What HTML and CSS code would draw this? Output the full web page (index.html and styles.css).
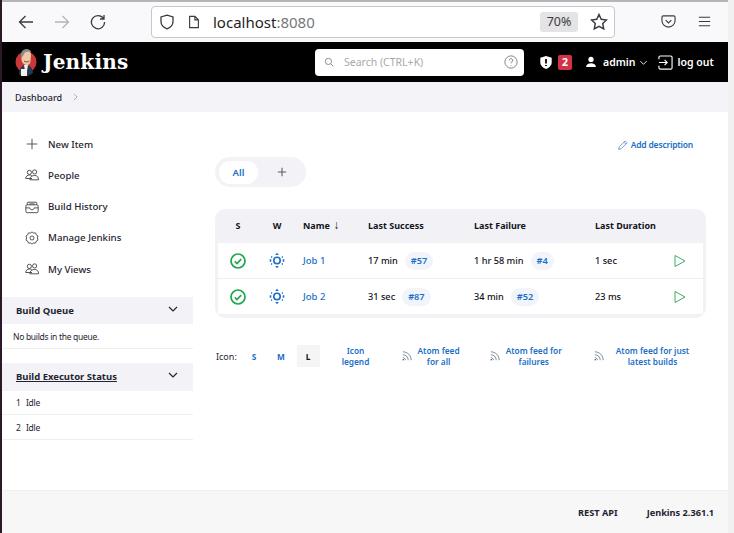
FILE: index.html
```html
<!DOCTYPE html>
<html lang="en">
<head>
    <meta charset="UTF-8">
    <meta name="viewport" content="width=device-width, initial-scale=1.0">
    <title>Dashboard [Jenkins]</title>
    <link rel="stylesheet" href="styles.css">
</head>
<body>
<div class="screen">
    <div class="edge"></div>
    <div class="window">
        <div class="toolbar">
            <svg class="nav-icon" viewBox="0 0 16 16"><path d="M15 8H1.500M7.500 2 1.500 8l6 6"/></svg>
            <svg class="nav-icon off" viewBox="0 0 16 16"><path d="M1 8h13.500M8.500 2l6 6-6 6"/></svg>
            <svg class="nav-icon" viewBox="0 0 16 16"><path d="M13.500 4.500A6.600 6.600 0 1 0 14.600 8M14 1v4h-4"/></svg>
            <div class="urlbar">
                <svg class="url-icon" viewBox="0 0 16 16"><path d="M8 1.200 14 3v4.500c0 3.600-2.600 6-6 7.300-3.400-1.300-6-3.700-6-7.300V3z"/></svg>
                <svg class="url-icon page" viewBox="0 0 16 16"><path d="M3 1.500h6l4 4V14.500H3zM9 1.500v4h4"/></svg>
                <span class="url-text">localhost<span class="url-port">:8080</span></span>
                <span class="zoom-level">70%</span>
                <svg class="url-icon star" viewBox="0 0 16 16"><path d="m8 1.300 2 4.300 4.700.6-3.400 3.200.9 4.700L8 11.800l-4.200 2.300.9-4.700L1.300 6.200 6 5.600z"/></svg>
            </div>
            <svg class="tool-icon pocket" viewBox="0 0 16 16"><path d="M2.500 2h11A1.500 1.500 0 0 1 15 3.500V7A7 7 0 0 1 1 7V3.500A1.500 1.500 0 0 1 2.500 2zM5 6.500l3 3 3-3"/></svg>
            <svg class="tool-icon menu" viewBox="0 0 16 16"><path d="M2 3.500h12M2 8h12M2 12.500h12"/></svg>
        </div>

        <header class="page-header">
            <a class="brand">
                <svg class="logo" viewBox="0 0 22 28">
                    <circle cx="11" cy="14" r="10.500" fill="#c8373a"/>
                    <path d="M4 26c.5-6 3-9 7-9s6.500 3 7 8l-5 3H7z" fill="#263a52"/>
                    <path d="M9 17h4l-1 6h-2z" fill="#f4f1ea"/>
                    <path d="M6.500 7c0-3 2-5 4.800-5s4.700 2 4.700 5l-.5 7c-.8 2.500-2.500 3.500-4.500 3-2.500-.5-4-2.500-4.500-5z" fill="#f0c8a8"/>
                    <path d="M6.500 10C5 5 7.500 1 11.500 1c2.500 0 4.300 1.200 4.800 3.500-2.500-1.200-5.500-.8-6.800.5-.5 1.500-1.500 3-3 5z" fill="#8a8d90"/>
                    <path d="M9 13c1.500 1.200 4 1.200 5.500 0" stroke="#8c3a2c" fill="none"/>
                    <rect x="6" y="21" width="6" height="7" fill="#f4f1ea"/>
                </svg>
                <span class="brand-name">Jenkins</span>
            </a>
            <div class="search">
                <svg class="search-icon" viewBox="0 0 16 16"><circle cx="7" cy="7" r="5"/><path d="m11 11 4 4"/></svg>
                <span class="search-hint">Search (CTRL+K)</span>
                <svg class="help-icon" viewBox="0 0 16 16"><circle cx="8" cy="8" r="7"/><path d="M6 6.200a2 2 0 1 1 3 1.700c-.7.4-1 .8-1 1.600M8 11.500v.8"/></svg>
            </div>
            <svg class="shield" viewBox="0 0 16 16"><path d="M8 .5 14.500 2.500V8c0 3.500-3 6-6.500 7.500C4.500 14 1.500 11.500 1.500 8V2.500z" fill="#fff"/><path d="M8 4v5M8 10.800v1.200" stroke="#000" stroke-width="2"/></svg>
            <span class="alert-count">2</span>
            <svg class="user-icon" viewBox="0 0 16 16"><circle cx="8" cy="4.500" r="3.500"/><path d="M1.500 14.500c0-3.500 3-5 6.500-5s6.500 1.500 6.500 5z"/></svg>
            <span class="head-link admin">admin</span>
            <svg class="head-chevron" viewBox="0 0 10 10"><path d="m1.500 3.500 3.500 3.500 3.500-3.500"/></svg>
            <svg class="logout-icon" viewBox="0 0 16 16"><path d="M1 4.500V2.500A1.500 1.500 0 0 1 2.500 1h11A1.500 1.500 0 0 1 15 2.500v11a1.500 1.500 0 0 1-1.500 1.500h-11A1.500 1.500 0 0 1 1 13.500V11.500M1 8h8.500M7 5.200 9.800 8 7 10.800"/></svg>
            <span class="head-link">log out</span>
        </header>

        <nav class="breadcrumbs">
            <span>Dashboard</span>
            <svg class="crumb-arrow" viewBox="0 0 8 10"><path d="m2 1 4 4-4 4"/></svg>
        </nav>

        <div class="content">
            <aside class="side">
                <ul class="tasks">
                    <li><svg class="task-icon" viewBox="0 0 16 16"><path d="M8 2v12M2 8h12"/></svg>New Item</li>
                    <li><svg class="task-icon" viewBox="0 0 16 16"><circle cx="5" cy="5" r="2.400"/><circle cx="11" cy="4.500" r="2.400"/><path d="M.8 12c0-2.500 2-4 4.200-4 2.500 0 3 1 3 1M.8 12H8M5.500 13.500c0-3 2.500-5 5.500-5s4.500 2 4.500 5z"/></svg>People</li>
                    <li><svg class="task-icon" viewBox="0 0 16 16"><rect x="1" y="5.500" width="14" height="9" rx="1.500"/><path d="M2.500 5.500V3.500A1 1 0 0 1 3.500 2.500h9a1 1 0 0 1 1 1v2M1 9h4.500c0 1.500 1 2 2.500 2s2.500-.5 2.500-2H15M5 4.500h6"/></svg>Build History</li>
                    <li><svg class="task-icon" viewBox="0 0 16 16"><path d="M8 1l1.600 1.300 2.500-.1.700 2 2 1.400-.6 2.400.6 2.400-2 1.400-.7 2-2.500-.1L8 15l-1.600-1.300-2.500.1-.7-2-2-1.400.6-2.400-.6-2.400 2-1.400.7-2 2.500.1z"/><circle cx="8" cy="8" r="2.300"/></svg>Manage Jenkins</li>
                    <li><svg class="task-icon" viewBox="0 0 16 16"><circle cx="5" cy="5" r="2.400"/><circle cx="11" cy="4.500" r="2.400"/><path d="M.8 12c0-2.500 2-4 4.200-4 2.500 0 3 1 3 1M.8 12H8M5.500 13.500c0-3 2.500-5 5.500-5s4.500 2 4.500 5z"/></svg>My Views</li>
                </ul>

                <section class="panel">
                    <div class="panel-head"><span>Build Queue</span><svg class="panel-chevron" viewBox="0 0 10 10"><path d="m1 3 4 4 4-4"/></svg></div>
                    <div class="panel-row queue-empty">No builds in the queue.</div>
                </section>

                <section class="panel">
                    <div class="panel-head tall"><span class="underlined">Build Executor Status</span><svg class="panel-chevron" viewBox="0 0 10 10"><path d="m1 3 4 4 4-4"/></svg></div>
                    <div class="panel-row"><span class="exec-num">1</span>Idle</div>
                    <div class="panel-row"><span class="exec-num">2</span>Idle</div>
                </section>
            </aside>

            <main class="main">
                <div class="main-top">
                    <a class="link add-desc">
                        <svg class="pencil" viewBox="0 0 16 16"><path d="M11.500 1.500l3 3L5 14l-4 1 1-4zM9.500 3.500l3 3"/></svg>Add description
                    </a>
                </div>
                <div class="tabs">
                    <span class="tab active">All</span>
                    <span class="tab add">
                        <svg class="plus" viewBox="0 0 12 12"><path d="M6 1v10M1 6h10"/></svg>
                    </span>
                </div>

                <div class="projects">
                    <table>
                        <colgroup>
                            <col class="c-s"><col class="c-w"><col class="c-name"><col class="c-ok"><col class="c-fail"><col class="c-dur"><col>
                        </colgroup>
                        <thead>
                            <tr>
                                <th class="mid">S</th>
                                <th class="mid">W</th>
                                <th>Name <span class="sort">↓</span></th>
                                <th>Last Success</th>
                                <th>Last Failure</th>
                                <th>Last Duration</th>
                                <th></th>
                            </tr>
                        </thead>
                        <tbody>
                            <tr>
                                <td class="mid"><svg class="status" viewBox="0 0 16 16"><circle cx="8" cy="8" r="7"/><path d="m4.800 8.300 2.200 2.200 4.200-4.400"/></svg></td>
                                <td class="mid"><svg class="weather" viewBox="0 0 16 16"><circle cx="8" cy="8" r="3.200"/><path d="M2 4.500h1.200M12.800 4.500H14M2 11.500h1.200M12.800 11.500H14M1.500 6.800v2.400M14.500 6.800v2.400"/><path class="fill" d="m8 .3 1.800 2.200H6.200zM8 15.700l1.800-2.200H6.200z"/></svg></td>
                                <td><a class="link job">Job 1</a></td>
                                <td>17 min<a class="build">#57</a></td>
                                <td>1 hr 58 min<a class="build">#4</a></td>
                                <td>1 sec</td>
                                <td><svg class="play" viewBox="0 0 12 14"><path d="M1 1.500v11l10-5.500z"/></svg></td>
                            </tr>
                            <tr>
                                <td class="mid"><svg class="status" viewBox="0 0 16 16"><circle cx="8" cy="8" r="7"/><path d="m4.800 8.300 2.200 2.200 4.200-4.400"/></svg></td>
                                <td class="mid"><svg class="weather" viewBox="0 0 16 16"><circle cx="8" cy="8" r="3.200"/><path d="M2 4.500h1.200M12.800 4.500H14M2 11.500h1.200M12.800 11.500H14M1.500 6.800v2.400M14.500 6.800v2.400"/><path class="fill" d="m8 .3 1.800 2.200H6.200zM8 15.700l1.800-2.200H6.200z"/></svg></td>
                                <td><a class="link job">Job 2</a></td>
                                <td>31 sec<a class="build">#87</a></td>
                                <td>34 min<a class="build">#52</a></td>
                                <td>23 ms</td>
                                <td><svg class="play" viewBox="0 0 12 14"><path d="M1 1.500v11l10-5.500z"/></svg></td>
                            </tr>
                        </tbody>
                    </table>
                </div>

                <div class="icon-bar">
                    <span class="icon-label">Icon:</span>
                    <a class="size">S</a>
                    <a class="size">M</a>
                    <span class="size current">L</span>
                    <a class="link legend">Icon<br>legend</a>
                    <a class="link feed feed-all"><svg class="rss" viewBox="0 0 12 12"><path d="M1 1c5.500 0 10 4.500 10 10M1 4.500c3.600 0 6.500 2.900 6.500 6.500M1 8c1.700 0 3 1.300 3 3"/><circle class="dot" cx="1.500" cy="10.500" r="1"/></svg><span>Atom feed<br>for all</span></a>
                    <a class="link feed feed-fail"><svg class="rss" viewBox="0 0 12 12"><path d="M1 1c5.500 0 10 4.500 10 10M1 4.500c3.600 0 6.500 2.900 6.500 6.500M1 8c1.700 0 3 1.300 3 3"/><circle class="dot" cx="1.500" cy="10.500" r="1"/></svg><span>Atom feed for<br>failures</span></a>
                    <a class="link feed feed-latest"><svg class="rss" viewBox="0 0 12 12"><path d="M1 1c5.500 0 10 4.500 10 10M1 4.500c3.600 0 6.500 2.900 6.500 6.500M1 8c1.700 0 3 1.300 3 3"/><circle class="dot" cx="1.500" cy="10.500" r="1"/></svg><span>Atom feed for just<br>latest builds</span></a>
                </div>
            </main>
        </div>

        <footer class="page-footer">
            <span>REST API</span>
            <span>Jenkins 2.361.1</span>
        </footer>
    </div>
    <div class="scrollbar"></div>
</div>
</body>
</html>
```

FILE: styles.css
```css
* {padding: 0;margin: 0;box-sizing: border-box;}
html, body {height: 100%;overflow: hidden;}
body {font-family: "Noto Sans", "Open Sans", sans-serif;font-size: 9.5px;color: #1f2430;background: #fff;}
svg {fill: none;stroke: currentColor;flex: none;display: block;}
ul {list-style: none;}

.screen {display: flex;height: 533px;}
.edge {width: 2px;background: #2a1a28;}
.window {flex: 1;display: flex;flex-direction: column;min-width: 0;}
.scrollbar {width: 6px;background: #f1f1f1;}

/* browser chrome */
.toolbar {height: 42px;display: flex;align-items: center;background: #f9f9fb;border-top: 2px solid #b5b5b5;padding-bottom: 1px;color: #3a3a40;}
.nav-icon {width: 16px;height: 16px;margin-left: 16px;margin-right: 4px;stroke-width: 1.300;}
.nav-icon.off {color: #b4b4b8;}
.urlbar {width: 464px;height: 32px;margin-left: 41px;background: #fff;border: 1px solid #c8c8cc;border-radius: 4px;display: flex;align-items: center;padding-left: 7px;}
.url-icon {width: 16px;height: 16px;stroke-width: 1.300;}
.url-icon.page {margin-left: 12px;width: 14px;}
.url-text {margin-left: 12px;font-size: 15px;color: #1f1f24;}
.url-port {color: #77777c;}
.zoom-level {margin-left: auto;width: 38px;height: 20px;background: #e4e4e6;border-radius: 3px;font-size: 12.500px;line-height: 20px;text-align: center;}
.url-icon.star {width: 18px;height: 18px;margin: 0 6px 0 12px;}
.tool-icon {width: 15px;height: 15px;stroke-width: 1.200;}
.pocket {margin-left: 46px;}
.menu {margin-left: 21px;}

/* jenkins header */
.page-header {height: 40px;background: #000;color: #fff;display: flex;align-items: center;padding-left: 13px;flex: none;}
.brand {display: flex;align-items: center;width: 300px;margin-top: -1px;}
.logo {width: 22px;height: 28px;stroke: none;}
.brand-name {margin-left: 6px;font-family: "DejaVu Serif", serif;font-weight: 700;font-size: 20px;letter-spacing: .2px;}
.search {width: 209px;height: 27px;background: #fff;border-radius: 4px;display: flex;align-items: center;padding: 0 6px 0 9px;color: #77777c;}
.search-icon {width: 10px;height: 10px;stroke-width: 1.300;}
.search-hint {margin-left: 10px;font-size: 10.500px;color: #a8a8ae;}
.help-icon {width: 14px;height: 14px;margin-left: auto;stroke-width: 1;}
.shield {width: 14px;height: 15px;margin-left: 15px;stroke: none;}
.shield path + path {stroke: #000;}
.alert-count {width: 14px;height: 15px;margin-left: 5px;background: #d33347;border-radius: 2px;font-weight: 700;font-size: 10.500px;line-height: 15px;text-align: center;}
.user-icon {width: 12px;height: 12px;margin-left: 13px;fill: #fff;stroke: none;}
.head-link {font-weight: 600;font-size: 10.500px;margin-left: 4px;}
.admin {margin-left: 6px;}
.head-chevron {width: 9px;height: 9px;margin-left: 4px;stroke-width: 1;}
.logout-icon {width: 15px;height: 15px;margin-left: 10px;stroke-width: 1.200;}

.breadcrumbs {height: 30px;background: #f4f4f8;display: flex;align-items: center;padding-left: 13px;font-size: 9px;font-weight: 500;flex: none;}
.crumb-arrow {width: 7px;height: 8px;margin-left: 10px;color: #9a9aa0;}

.content {flex: 1;display: flex;min-height: 0;}
.side {width: 191px;padding-top: 16.500px;flex: none;}
.tasks li {height: 31.250px;display: flex;align-items: center;font-size: 9.700px;font-weight: 500;padding-left: 23px;}
.task-icon {width: 14px;height: 14px;margin-right: 9px;stroke-width: 1;color: #3a3f4a;}

.panel {margin-top: 12.500px;}
.panel + .panel {margin-top: 14px;}
.panel-head {height: 27px;background: #f3f3f7;display: flex;align-items: center;justify-content: space-between;padding: 0 15px 0 14px;font-weight: 700;font-size: 9.500px;}
.panel-head.tall {height: 28px;}
.underlined {text-decoration: underline;}
.panel-chevron {width: 10px;height: 10px;margin-top: -3px;stroke-width: 1.200;}
.panel-row {height: 24.500px;display: flex;align-items: center;padding-left: 14px;border-bottom: 1px solid #eeeeee;font-size: 8.500px;letter-spacing: -.3px;}
.queue-empty {padding-left: 11px;}
.exec-num {width: 10px;}

.main {flex: 1;min-width: 0;padding: 0 22px 0 22px;}
.main-top {height: 45px;display: flex;justify-content: flex-end;align-items: flex-start;padding: 27px 13px 0 0;}
.link {color: #1b6fc8;font-weight: 600;}
.add-desc {display: flex;align-items: center;font-size: 8.500px;letter-spacing: -.2px;}
.pencil {width: 10px;height: 10px;margin-right: 3px;stroke-width: 1;}

.tabs {width: 91px;height: 30px;background: #f3f3f7;border-radius: 15px;display: flex;align-items: center;padding-left: 4px;}
.tab {display: flex;align-items: center;justify-content: center;font-weight: 600;font-size: 9.500px;}
.tab.active {width: 39px;height: 23px;background: #fff;border-radius: 12px;color: #1b6fc8;}
.tab.add {width: 48px;color: #5c5c64;}
.plus {width: 10px;height: 10px;stroke-width: 1.300;}

.projects {width: 491px;margin-top: 22px;background: #f2f2f6;border-radius: 10px;padding: 0 3px 4px;}
.projects table {width: 100%;table-layout: fixed;border-collapse: collapse;}
.c-s {width: 40px;}
.c-w {width: 38px;}
.c-name {width: 65px;}
.c-ok {width: 106px;}
.c-fail {width: 121px;}
.c-dur {width: 77px;}
.projects th {height: 34px;text-align: left;padding: 0 0 2px 7px;font-size: 9px;font-weight: 700;color: #14141c;}
.projects td {height: 35.500px;background: #fff;padding-left: 7px;font-size: 9.200px;font-weight: 500;color: #14141c;border-bottom: 1px solid #eeeef2;}
.projects tr:last-child td {border-bottom: 0;}
.projects th.mid, .projects td.mid {padding-left: 0;text-align: center;}
.sort {margin-left: 1px;font-size: 12px;line-height: 9px;}
.job {font-size: 9.500px;font-weight: 500;}
.build {display: inline-block;margin-left: 7px;height: 18px;line-height: 18px;padding: 0 6px;background: #f1f5fb;border-radius: 9px;color: #1b6fc8;font-weight: 600;}
.status {width: 16px;height: 16px;margin: 0 auto;color: #1ea64f;stroke-width: 1.700;}
.weather {width: 16px;height: 17px;margin: 0 auto;color: #1b6fc8;stroke-width: 1.600;}
.weather .fill {fill: currentColor;stroke: none;}
.play {width: 12px;height: 14px;color: #2aa259;stroke-width: .9;margin-left: 2px;}

.icon-bar {width: 491px;margin-top: 27px;display: flex;align-items: center;font-size: 8.300px;line-height: 11px;}
.icon-label {font-size: 9px;width: 27.500px;padding-left: 1px;}
.size {width: 23px;height: 22px;margin-right: 4px;display: flex;align-items: center;justify-content: center;color: #1b6fc8;font-weight: 700;}
.size.current {background: #f5f5f5;color: #14141c;}
.legend {width: 40px;margin-left: 12px;text-align: center;}
.feed {display: flex;align-items: center;text-align: center;}
.feed-all {margin-left: 26px;}
.feed-fail {margin-left: 30px;}
.feed-latest {margin-left: 32px;}
.rss {width: 10px;height: 10px;margin-right: 6px;stroke-width: .9;color: #4f6478;}
.feed-latest .rss {margin-right: 12px;}
.rss .dot {fill: currentColor;stroke: none;}

.page-footer {height: 43px;background: #f7f7f8;border-top: 1px solid #f0f0f0;display: flex;justify-content: flex-end;align-items: center;gap: 29px;padding-right: 14px;font-weight: 700;font-size: 9.200px;flex: none;}
```
